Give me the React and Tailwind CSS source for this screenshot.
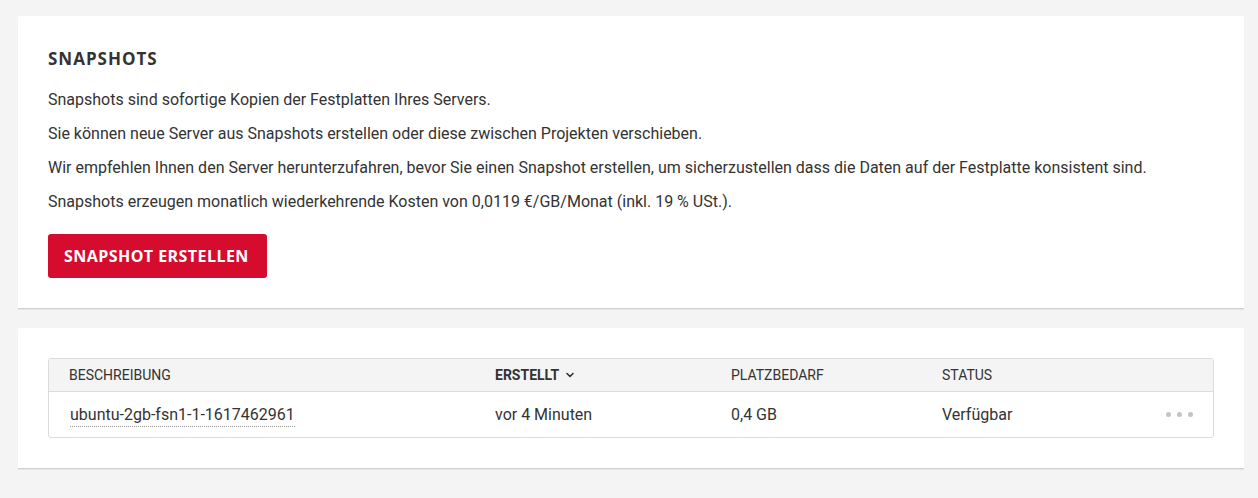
export default function App() {
  const font = { fontFamily: 'Roboto, "Liberation Sans", sans-serif' };
  const head = { fontFamily: '"Open Sans", "DejaVu Sans", sans-serif' };
  return (
    <div className="min-h-[498px] bg-[#f4f4f4] pl-[18px] pr-[14px] pt-4 pb-[30px] text-[#333]" style={font}>
      <div className="bg-white border-b border-[#d0d0d0] shadow-[0_1px_1px_rgba(0,0,0,0.05)] px-[30px] pt-[32px] pb-[30px]">
        <h2 className="text-[17px] font-bold tracking-[1px] text-[#333] leading-[22px]" style={head}>SNAPSHOTS</h2>
        <div className="mt-[20px] text-[16px] leading-[20px] flex flex-col gap-[14px] text-[#333]">
          <p>Snapshots sind sofortige Kopien der Festplatten Ihres Servers.</p>
          <p>Sie können neue Server aus Snapshots erstellen oder diese zwischen Projekten verschieben.</p>
          <p>Wir empfehlen Ihnen den Server herunterzufahren, bevor Sie einen Snapshot erstellen, um sicherzustellen dass die Daten auf der Festplatte konsistent sind.</p>
          <p>Snapshots erzeugen monatlich wiederkehrende Kosten von 0,0119 €/GB/Monat (inkl. 19 % USt.).</p>
        </div>
        <button className="mt-[22px] h-[44px] pl-[16px] pr-[18px] bg-[#d50c2d] text-white rounded-[3px] text-[16px] font-bold tracking-[0.45px]" style={head}>SNAPSHOT ERSTELLEN</button>
      </div>
      <div className="mt-[19px] bg-white border-b border-[#d0d0d0] shadow-[0_1px_1px_rgba(0,0,0,0.05)] px-[30px] pt-[30px] pb-[30px]">
        <div className="border border-[#dcdcdc] rounded-[3px] overflow-hidden">
          <div className="grid grid-cols-[426px_236px_211px_1fr] h-[33px] items-center bg-[#f4f4f4] border-b border-[#dcdcdc] text-[14px] text-[#333] pl-[20px]">
            <div>BESCHREIBUNG</div>
            <div className="font-bold flex items-center gap-[6px]">ERSTELLT
              <svg width="10" height="10" viewBox="0 0 10 10"><path d="M2 3.5 L5 6.5 L8 3.5" fill="none" stroke="#333" strokeWidth="1.6" strokeLinecap="round" strokeLinejoin="round"/></svg>
            </div>
            <div>PLATZBEDARF</div>
            <div>STATUS</div>
          </div>
          <div className="grid grid-cols-[426px_236px_211px_1fr] h-[45px] items-center text-[16px] text-[#333] pl-[21px]">
            <div><span className="border-b border-dotted border-[#999] pb-[2px]">ubuntu-2gb-fsn1-1-1617462961</span></div>
            <div className="-ml-[1px]">vor 4 Minuten</div>
            <div className="-ml-[1px]">0,4 GB</div>
            <div className="-ml-[1px] flex items-center justify-between pr-[20px]">
              <span>Verfügbar</span>
              <span className="flex gap-[6px]">
                <span className="w-[5px] h-[5px] rounded-full bg-[#c4c4c4]"></span>
                <span className="w-[5px] h-[5px] rounded-full bg-[#c4c4c4]"></span>
                <span className="w-[5px] h-[5px] rounded-full bg-[#c4c4c4]"></span>
              </span>
            </div>
          </div>
        </div>
      </div>
    </div>
  );
}
